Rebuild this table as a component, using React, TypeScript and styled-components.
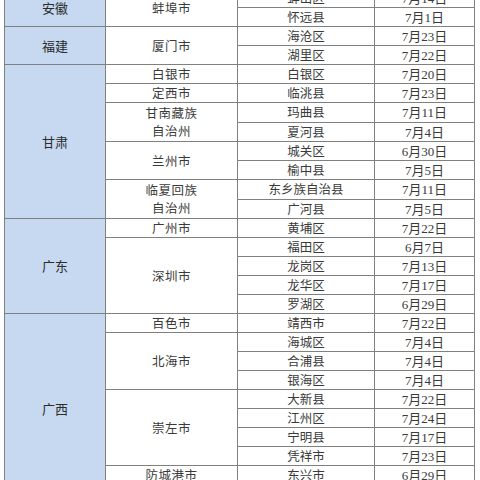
import React from 'react';
import styled, { createGlobalStyle } from 'styled-components';

const GlobalStyle = createGlobalStyle`
  html, body {
    margin: 0;
    padding: 0;
    background: #ffffff;
    overflow: hidden;
  }
  body {
    font-family: "Liberation Serif", "Noto Sans CJK SC", serif;
  }
`;

const Page = styled.div`
  width: 480px;
  height: 480px;
  overflow: hidden;
  padding-left: 4px;
  box-sizing: border-box;
`;

const Table = styled.table`
  margin-top: -12px;
  border-collapse: collapse;
  table-layout: fixed;
  width: 471px;
  color: #3a3a3a;
  font-size: 12.5px;
`;

const Col = styled.col<{ $w: number }>`
  width: ${(p) => p.$w}px;
`;

const Row = styled.tr`
  height: 19px;
`;

const Cell = styled.td`
  border: 1px solid #808080;
  padding: 2px 0 0;
  height: 16px;
  text-align: center;
  vertical-align: middle;
  line-height: 16px;
  white-space: nowrap;
  box-sizing: content-box;
`;

const ProvinceCell = styled(Cell)`
  background: #c6d9f1;
  color: #2b2b2b;
  font-size: 13px;
`;

const CityCell = styled(Cell)`
  letter-spacing: 0.5px;
`;

const CityLine = styled.div`
  line-height: 18px;
`;

const DistrictCell = styled(Cell)``;

const DateCell = styled(Cell)`
  font-size: 13px;
`;

type District = [string, string];
type City = { name: string; lines?: string[]; districts: District[] };
type Province = { name: string; cities: City[] };

const data: Province[] = [
  {
    name: '安徽',
    cities: [
      {
        name: '蚌埠市',
        districts: [
          ['蚌山区', '7月14日'],
          ['怀远县', '7月1日'],
        ],
      },
    ],
  },
  {
    name: '福建',
    cities: [
      {
        name: '厦门市',
        districts: [
          ['海沧区', '7月23日'],
          ['湖里区', '7月22日'],
        ],
      },
    ],
  },
  {
    name: '甘肃',
    cities: [
      { name: '白银市', districts: [['白银区', '7月20日']] },
      { name: '定西市', districts: [['临洮县', '7月23日']] },
      {
        name: '甘南藏族自治州',
        lines: ['甘南藏族', '自治州'],
        districts: [
          ['玛曲县', '7月11日'],
          ['夏河县', '7月4日'],
        ],
      },
      {
        name: '兰州市',
        districts: [
          ['城关区', '6月30日'],
          ['榆中县', '7月5日'],
        ],
      },
      {
        name: '临夏回族自治州',
        lines: ['临夏回族', '自治州'],
        districts: [
          ['东乡族自治县', '7月11日'],
          ['广河县', '7月5日'],
        ],
      },
    ],
  },
  {
    name: '广东',
    cities: [
      { name: '广州市', districts: [['黄埔区', '7月22日']] },
      {
        name: '深圳市',
        districts: [
          ['福田区', '6月7日'],
          ['龙岗区', '7月13日'],
          ['龙华区', '7月17日'],
          ['罗湖区', '6月29日'],
        ],
      },
    ],
  },
  {
    name: '广西',
    cities: [
      { name: '百色市', districts: [['靖西市', '7月22日']] },
      {
        name: '北海市',
        districts: [
          ['海城区', '7月4日'],
          ['合浦县', '7月4日'],
          ['银海区', '7月4日'],
        ],
      },
      {
        name: '崇左市',
        districts: [
          ['大新县', '7月22日'],
          ['江州区', '7月24日'],
          ['宁明县', '7月17日'],
          ['凭祥市', '7月23日'],
        ],
      },
      { name: '防城港市', districts: [['东兴市', '6月29日']] },
      { name: '南宁市', districts: [['西乡塘区', '7月20日']] },
    ],
  },
];

const columns = [101, 132, 137, 100];

const App: React.FC = () => {
  const rows: React.ReactNode[] = [];

  data.forEach((province) => {
    const provinceSpan = province.cities.reduce(
      (sum, c) => sum + c.districts.length,
      0,
    );
    province.cities.forEach((city, ci) => {
      city.districts.forEach(([district, date], di) => {
        rows.push(
          <Row key={`${province.name}-${city.name}-${district}`}>
            {ci === 0 && di === 0 && (
              <ProvinceCell rowSpan={provinceSpan}>{province.name}</ProvinceCell>
            )}
            {di === 0 && (
              <CityCell rowSpan={city.districts.length}>
                {city.lines
                  ? city.lines.map((line) => <CityLine key={line}>{line}</CityLine>)
                  : city.name}
              </CityCell>
            )}
            <DistrictCell>{district}</DistrictCell>
            <DateCell>{date}</DateCell>
          </Row>,
        );
      });
    });
  });

  return (
    <Page>
      <GlobalStyle />
      <Table>
        <colgroup>
          {columns.map((w, i) => (
            <Col key={i} $w={w} />
          ))}
        </colgroup>
        <tbody>{rows}</tbody>
      </Table>
    </Page>
  );
};

export default App;
